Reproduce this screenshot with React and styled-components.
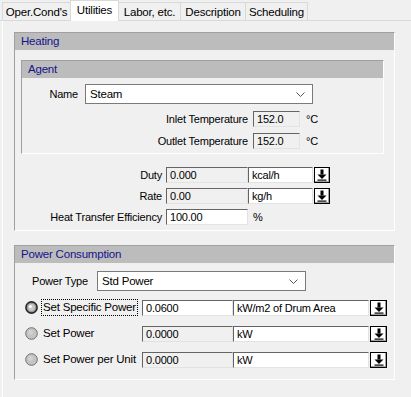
import React from "react";
import styled, { createGlobalStyle } from "styled-components";

const GlobalStyle = createGlobalStyle`
  html, body {
    margin: 0;
    padding: 0;
    background: #f0f0f0;
  }
  body {
    font-family: "Liberation Sans", Arial, sans-serif;
    font-size: 11px;
    letter-spacing: -0.2px;
    color: #000;
  }
  * {
    box-sizing: border-box;
  }
`;

const Window = styled.div`
  width: 411px;
  height: 397px;
  display: flex;
  flex-direction: column;
  overflow: hidden;
`;

const TabStrip = styled.div`
  display: flex;
  align-items: flex-end;
  height: 21px;
  padding-left: 2px;
  border-bottom: 1px solid #d9d9d9;
`;

const Tab = styled.div`
  width: ${(p) => p.$w}px;
  height: ${(p) => (p.$active ? 21 : 18)}px;
  margin-bottom: ${(p) => (p.$active ? -1 : 0)}px;
  margin-left: -1px;
  display: flex;
  align-items: center;
  justify-content: center;
  padding-bottom: ${(p) => (p.$active ? 3 : 0)}px;
  background: ${(p) => (p.$active ? "#fff" : "#f0f0f0")};
  border: 1px solid #d9d9d9;
  border-bottom: none;
  position: relative;
  z-index: ${(p) => (p.$active ? 1 : 0)};
  font-size: 11.5px;
  &:first-child {
    margin-left: 0;
  }
`;

const Page = styled.div`
  flex: 1;
  margin-left: 2px;
  border-left: 1px solid #fff;
  padding: 11px 16px 0 11px;
  display: flex;
  flex-direction: column;
  gap: 14px;
`;

const Group = styled.div`
  display: flex;
  flex-direction: column;
  border-top: 1px solid #a0a0a0;
  border-left: 1px solid #a0a0a0;
  border-right: 1px solid #fff;
  border-bottom: 1px solid #fff;
  margin: ${(p) => p.$margin || "0"};
  padding-bottom: ${(p) => p.$pb || 0}px;
`;

const GroupHeader = styled.div`
  height: 17px;
  line-height: 17px;
  padding-left: 6px;
  background: #bcbcbc;
  color: #14148a;
  font-size: 11.5px;
`;

const Rows = styled.div`
  display: flex;
  flex-direction: column;
  gap: ${(p) => p.$gap}px;
  margin-top: ${(p) => p.$mt}px;
  padding-left: ${(p) => p.$pl || 0}px;
`;

const Row = styled.div`
  display: flex;
  align-items: center;
  height: ${(p) => p.$h || 16}px;
  margin-top: ${(p) => p.$mt || 0}px;
`;

const Label = styled.div`
  width: ${(p) => p.$w}px;
  margin-right: ${(p) => p.$gap}px;
  text-align: ${(p) => (p.$left ? "left" : "right")};
  white-space: nowrap;
  flex-shrink: 0;
`;

const Field = styled.div`
  width: ${(p) => p.$w}px;
  height: 16px;
  line-height: 14px;
  padding-left: 3px;
  background: ${(p) => (p.$readOnly ? "#f0f0f0" : "#fff")};
  border-top: 1px solid #646464;
  border-left: 1px solid #646464;
  border-right: 1px solid #e3e3e3;
  border-bottom: 1px solid #e3e3e3;
  white-space: nowrap;
  overflow: hidden;
  flex-shrink: 0;
`;

const Unit = styled.div`
  margin-left: ${(p) => p.$ml}px;
  white-space: nowrap;
`;

const Select = styled.div`
  width: ${(p) => p.$w}px;
  height: 20px;
  display: flex;
  align-items: center;
  justify-content: space-between;
  padding: 0 7px 0 4px;
  background: #fff;
  border: 1px solid #7a7a7a;
  font-size: 11.5px;
  flex-shrink: 0;
`;

const ArrowBtn = styled.div`
  width: ${(p) => p.$w}px;
  height: 16px;
  margin-left: ${(p) => p.$ml}px;
  border: 1px solid #000;
  background: #fff;
  box-shadow: inset -1px -1px 0 #a0a0a0;
  display: flex;
  align-items: center;
  justify-content: center;
  flex-shrink: 0;
`;

const RadioWrap = styled.div`
  width: 13px;
  height: 13px;
  margin-right: 3px;
  display: flex;
  flex-shrink: 0;
`;

const RadioLabel = styled.div`
  width: 101px;
  flex-shrink: 0;
  display: flex;
`;

const RadioText = styled.span`
  padding: 1px 1px 2px 1px;
  border: 1px dotted ${(p) => (p.$focus ? "#000" : "transparent")};
  white-space: nowrap;
  font-size: 11.5px;
`;

const Chevron = () => (
  <svg width="9" height="5" viewBox="0 0 9 5">
    <path d="M0.5 0.5 L4.5 4.5 L8.5 0.5" fill="none" stroke="#555" strokeWidth="1" />
  </svg>
);

const DownArrow = () => (
  <svg width="10" height="12" viewBox="0 0 10 12">
    <rect x="3.5" y="0.5" width="3" height="5" fill="#000" />
    <path d="M0.5 5.5 L9.5 5.5 L5 10 Z" fill="#000" />
    <rect x="0.5" y="10.5" width="9" height="1.2" fill="#000" />
  </svg>
);

const Radio = ({ checked }) => (
  <RadioWrap>
    <svg width="13" height="13" viewBox="0 0 13 13">
      {checked ? (
        <>
          <circle cx="6.5" cy="6.5" r="5.6" fill="#9a9a9a" stroke="#2a2a2a" strokeWidth="1.6" />
          <circle cx="6.5" cy="6.5" r="3.4" fill="#c8c8c8" />
          <circle cx="5.4" cy="5.4" r="1.5" fill="#fff" />
        </>
      ) : (
        <>
          <circle cx="6.5" cy="6.5" r="5.8" fill="#c4c4c4" stroke="#6e6e6e" strokeWidth="1" />
          <circle cx="5.6" cy="5.4" r="2.4" fill="#d2d2d2" />
        </>
      )}
    </svg>
  </RadioWrap>
);

const tabs = [
  { label: "Oper.Cond's", w: 69 },
  { label: "Utilities", w: 49, active: true },
  { label: "Labor, etc.", w: 63 },
  { label: "Description", w: 66 },
  { label: "Scheduling", w: 63 },
];

const powerRows = [
  { label: "Set Specific Power", value: "0.0600", unit: "kW/m2 of Drum Area", checked: true },
  { label: "Set Power", value: "0.0000", unit: "kW", readOnly: true },
  { label: "Set Power per Unit", value: "0.0000", unit: "kW", readOnly: true },
];

const App = () => {
  return (
    <Window>
      <GlobalStyle />
      <TabStrip>
        {tabs.map((t) => (
          <Tab key={t.label} $w={t.w} $active={t.active}>
            {t.label}
          </Tab>
        ))}
      </TabStrip>

      <Page>
        <Group $pb={5}>
          <GroupHeader>Heating</GroupHeader>

          <Group $margin="10px 10px 0 6px" $pb={4}>
            <GroupHeader>Agent</GroupHeader>
            <Rows $gap={6} $mt={6}>
              <Row $h={20}>
                <Label $w={56} $gap={7}>Name</Label>
                <Select $w={228}>
                  <span>Steam</span>
                  <Chevron />
                </Select>
              </Row>
              <Row $mt={1}>
                <Label $w={226} $gap={5}>Inlet Temperature</Label>
                <Field $w={47} $readOnly>152.0</Field>
                <Unit $ml={6}>°C</Unit>
              </Row>
              <Row>
                <Label $w={226} $gap={5}>Outlet Temperature</Label>
                <Field $w={47} $readOnly>152.0</Field>
                <Unit $ml={6}>°C</Unit>
              </Row>
            </Rows>
          </Group>

          <Rows $gap={5} $mt={13}>
            <Row>
              <Label $w={147} $gap={4}>Duty</Label>
              <Field $w={82} $readOnly>0.000</Field>
              <Field $w={65}>kcal/h</Field>
              <ArrowBtn $w={16} $ml={1}>
                <DownArrow />
              </ArrowBtn>
            </Row>
            <Row>
              <Label $w={147} $gap={4}>Rate</Label>
              <Field $w={82} $readOnly>0.00</Field>
              <Field $w={65}>kg/h</Field>
              <ArrowBtn $w={16} $ml={1}>
                <DownArrow />
              </ArrowBtn>
            </Row>
            <Row>
              <Label $w={147} $gap={4}>Heat Transfer Efficiency</Label>
              <Field $w={82}>100.00</Field>
              <Unit $ml={5}>%</Unit>
            </Row>
          </Rows>
        </Group>

        <Group $pb={11}>
          <GroupHeader>Power Consumption</GroupHeader>
          <Rows $gap={9} $mt={8} $pl={10}>
            <Row $h={20}>
              <Label $w={72} $gap={0} $left style={{ paddingLeft: 7 }}>
                Power Type
              </Label>
              <Select $w={209}>
                <span>Std Power</span>
                <Chevron />
              </Select>
            </Row>
            {powerRows.map((r, i) => (
              <Row key={r.label} $h={17} $mt={i === 0 ? -1 : 0}>
                <Radio checked={r.checked} />
                <RadioLabel>
                  <RadioText $focus={r.checked}>{r.label}</RadioText>
                </RadioLabel>
                <Field $w={91} $readOnly={r.readOnly}>{r.value}</Field>
                <Field $w={136}>{r.unit}</Field>
                <ArrowBtn $w={17} $ml={1}>
                  <DownArrow />
                </ArrowBtn>
              </Row>
            ))}
          </Rows>
        </Group>
      </Page>
    </Window>
  );
};

export default App;
